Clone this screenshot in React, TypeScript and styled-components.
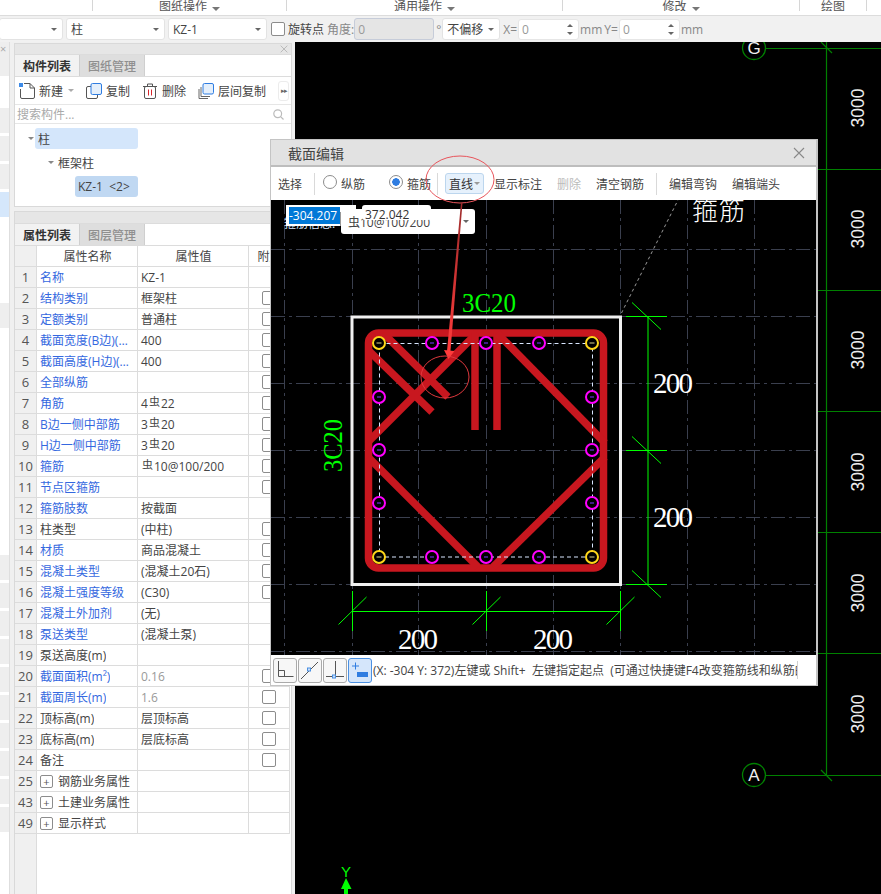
import React from "react";
import styled, { createGlobalStyle } from "styled-components";

const Global = createGlobalStyle`
  html, body { margin: 0; padding: 0; background: #fff; }
  * { box-sizing: border-box; }
`;

const FONT = `"Open Sans", "Noto Sans CJK SC", sans-serif`;

const Page = styled.div`
  position: relative;
  width: 881px;
  height: 894px;
  overflow: hidden;
  font-family: ${FONT};
  font-size: 12px;
  color: #333;
  background: #f0f0f0;
`;

/* ---------- ribbon ---------- */
const Ribbon = styled.div`
  display: flex;
  height: 16px;
  background: #fff;
  border-bottom: 1px solid #dcdcdc;
`;
const RibbonGroup = styled.div<{ $w: number; $last?: boolean }>`
  width: ${(p) => p.$w}px;
  height: 11px;
  display: flex;
  align-items: flex-end;
  justify-content: center;
  gap: 5px;
  overflow: hidden;
  line-height: 13px;
  color: #555;
  border-right: ${(p) => (p.$last ? "none" : "1px solid #d6d6d6")};
`;
const RibbonLabel = styled.span`
  font-size: 12px;
  flex: none;
  margin-bottom: -2px;
`;
const Caret = styled.i<{ $c?: string; $s?: number }>`
  display: inline-block;
  flex: none;
  width: 0;
  height: 0;
  border-left: ${(p) => p.$s ?? 3}px solid transparent;
  border-right: ${(p) => p.$s ?? 3}px solid transparent;
  border-top: ${(p) => p.$s ?? 3}px solid ${(p) => p.$c ?? "#666"};
`;

/* ---------- option bar ---------- */
const OptionBar = styled.div`
  height: 26px;
  display: flex;
  align-items: center;
  padding-left: 0;
  background: #f1f1f1;
`;
const SelectBox = styled.div<{ $w: number; $ml?: number }>`
  width: ${(p) => p.$w}px;
  height: 22px;
  margin-left: ${(p) => p.$ml ?? 0}px;
  padding: 0 5px 0 4px;
  display: flex;
  align-items: center;
  justify-content: space-between;
  background: #fff;
  border: 1px solid #e3e3e3;
  border-radius: 3px;
  color: #444;
`;
const CheckBox = styled.span<{ $ml?: number }>`
  display: inline-block;
  flex: none;
  width: 14px;
  height: 14px;
  margin-left: ${(p) => p.$ml ?? 0}px;
  background: #fff;
  border: 1px solid #8c8c8c;
  border-radius: 2px;
`;
const OptLabel = styled.span<{ $ml?: number; $muted?: boolean }>`
  flex: none;
  margin-left: ${(p) => p.$ml ?? 0}px;
  color: ${(p) => (p.$muted ? "#888" : "#444")};
  white-space: nowrap;
`;
const DisabledInput = styled.div`
  width: 80px;
  height: 22px;
  margin-left: 0;
  padding-left: 3px;
  display: flex;
  align-items: center;
  color: #999;
  background: #e5e5e5;
  border: 1px solid #c6ccd9;
  border-radius: 3px;
`;
const SpinInput = styled.div<{ $ml?: number }>`
  width: 61px;
  height: 21px;
  margin-left: ${(p) => p.$ml ?? 0}px;
  padding: 0 5px 0 3px;
  display: flex;
  align-items: center;
  justify-content: space-between;
  color: #999;
  background: #fff;
  border: 1px solid #e6e6e6;
  border-radius: 3px;
`;
const SpinArrows = styled.span`
  display: flex;
  flex-direction: column;
  gap: 5px;
`;
const UpCaret = styled.i`
  display: block;
  width: 0;
  height: 0;
  border-left: 3px solid transparent;
  border-right: 3px solid transparent;
  border-bottom: 3px solid #666;
`;

/* ---------- main ---------- */
const Main = styled.div`
  display: flex;
  height: 852px;
`;
const Strip = styled.div`
  width: 10px;
  flex: none;
  display: flex;
  flex-direction: column;
  background: #fff;
  border-right: 1px solid #dedede;
  overflow: hidden;
`;
const StripHead = styled.div`
  height: 34px;
  background: #eeeeee;
  color: #aaa;
  font-size: 11px;
  line-height: 14px;
  padding-left: 0;
`;
const StripBand = styled.div<{ $blue?: boolean; $mt: number }>`
  height: 25px;
  flex: none;
  margin-top: ${(p) => p.$mt}px;
  background: ${(p) => (p.$blue ? "#d5e7fb" : "#eeeeee")};
`;
const PanelColumn = styled.div`
  width: 278px;
  flex: none;
  margin-left: 4px;
  margin-right: 3px;
  padding-top: 1px;
  display: flex;
  flex-direction: column;
  gap: 4px;
`;
const Panel = styled.section<{ $grow?: boolean }>`
  display: flex;
  flex-direction: column;
  background: #fff;
  border: 1px solid #d9d9d9;
  ${(p) => (p.$grow ? "flex: 1; min-height: 0; border-bottom: none;" : "height: 164px;")}
`;
const PanelHead = styled.div<{ $h?: number }>`
  height: ${(p) => p.$h ?? 10}px;
  position: relative;
  flex: none;
  background: #e6e6e6;
  color: #aaa;
  display: flex;
  justify-content: flex-end;
  align-items: center;
  padding-right: 3px;
`;
const Tabs = styled.div`
  display: flex;
  height: 23px;
  flex: none;
  border-bottom: 1px solid #dcdcdc;
  border-top: 1px solid #dcdcdc;
`;
const Tab = styled.div<{ $active?: boolean }>`
  width: 65px;
  display: flex;
  align-items: center;
  justify-content: center;
  font-size: 12px;
  font-weight: ${(p) => (p.$active ? 700 : 500)};
  color: ${(p) => (p.$active ? "#333" : "#8f8f8f")};
  background: ${(p) => (p.$active ? "#f2f2f2" : "#dedede")};
  border-right: 1px solid #cfcfcf;
`;
const PanelBar = styled.div`
  height: 28px;
  flex: none;
  padding-left: 4px;
  padding-right: 2px;
  display: flex;
  align-items: center;
  gap: 12px;
  border-bottom: 1px solid #e6e6e6;
`;
const ToolItem = styled.div`
  display: flex;
  flex: none;
  align-items: center;
  gap: 4px;
  color: #444;
  white-space: nowrap;
`;
const ToolCaret = styled.span`
  display: flex;
  margin-left: 1px;
`;
const MoreBtn = styled.div`
  margin-left: auto;
  width: 11px;
  height: 20px;
  flex: none;
  display: flex;
  align-items: center;
  justify-content: center;
  border: 1px solid #ececec;
  border-radius: 3px;
  color: #666;
  font-size: 7px;
  letter-spacing: -1px;
`;
const SearchRow = styled.div`
  height: 19px;
  flex: none;
  padding: 0 7px 0 2px;
  display: flex;
  align-items: center;
  justify-content: space-between;
  color: #aaa;
  border-bottom: 1px solid #e6e6e6;
`;
const Tree = styled.div`
  flex: 1;
  display: flex;
  flex-direction: column;
  padding-top: 4px;
  gap: 3px;
`;
const TreeRow = styled.div<{ $indent: number }>`
  height: 21px;
  display: flex;
  align-items: center;
  padding-left: ${(p) => p.$indent}px;
  gap: 1px;
`;
const TreeLabel = styled.div<{ $bg?: string; $w?: number }>`
  height: 21px;
  width: ${(p) => (p.$w ? `${p.$w}px` : "auto")};
  padding: 0 3px;
  display: flex;
  align-items: center;
  background: ${(p) => p.$bg ?? "transparent"};
  border-radius: 3px;
  color: #444;
  white-space: nowrap;
`;

/* ---------- property table ---------- */
const PropGrid = styled.div`
  flex: 1;
  display: grid;
  grid-template-columns: 22px 101px 111px 41px;
  grid-auto-rows: 21px;
  align-content: start;
  background: linear-gradient(to right, #f0f0f0 21px, #dcdcdc 21px, #dcdcdc 22px, transparent 22px);
`;
const Cell = styled.div<{ $color?: string; $center?: boolean; $flush?: boolean }>`
  display: flex;
  align-items: center;
  min-width: 0;
  padding: ${(p) => (p.$flush ? "0" : "0 2px 0 3px")};
  color: ${(p) => p.$color ?? "#444"};
  justify-content: ${(p) => (p.$center ? "center" : "flex-start")};
  background: #fff;
  border-right: 1px solid #dcdcdc;
  border-bottom: 1px solid #dcdcdc;
  white-space: nowrap;
`;
const NumCell = styled(Cell)`
  padding: 0;
  justify-content: center;
  font-size: 13px;
  color: #555;
  background: #f0f0f0;
`;
const Ellipsis = styled.span`
  display: block;
  overflow: hidden;
  text-overflow: ellipsis;
`;
const Rebar = styled.span`
  font-size: 11px;
  margin: 0 1px;
  position: relative;
  top: -2px;
`;
const Expander = styled.span`
  width: 13px;
  height: 13px;
  flex: none;
  margin-right: 5px;
  border: 1px solid #8c8c8c;
  border-radius: 2px;
  display: flex;
  align-items: center;
  justify-content: center;
  font-size: 11px;
  line-height: 1;
  color: #555;
`;
const RowCheck = styled(CheckBox)`
  margin-left: 13px;
`;

/* ---------- cad canvas ---------- */
const CadArea = styled.div`
  flex: 1;
  background: #000;
  min-width: 0;
`;
const CadSvg = styled.svg`
  display: block;
`;

/* ---------- dialog ---------- */
const Dialog = styled.div`
  position: absolute;
  left: 270px;
  top: 139px;
  width: 548px;
  height: 547px;
  display: flex;
  flex-direction: column;
  background: #c9c9c9;
  border: 1px solid #c4c4c4;
  border-right-width: 2px;
`;
const DialogTitle = styled.div`
  height: 27px;
  flex: none;
  padding: 0 11px 0 17px;
  display: flex;
  align-items: center;
  justify-content: space-between;
  font-size: 14px;
  color: #444;
  background: #e2e2e2;
  border-bottom: 2px solid #bdbdbd;
`;
const DialogBar = styled.div`
  height: 33px;
  flex: none;
  padding-left: 7px;
  display: flex;
  align-items: center;
  background: #fff;
`;
const BarText = styled.span<{ $ml?: number; $muted?: boolean }>`
  flex: none;
  margin-left: ${(p) => p.$ml ?? 0}px;
  color: ${(p) => (p.$muted ? "#bbb" : "#444")};
  white-space: nowrap;
`;
const BarDivider = styled.span<{ $ml: number }>`
  width: 1px;
  height: 22px;
  flex: none;
  margin-left: ${(p) => p.$ml}px;
  background: #d9d9d9;
`;
const Radio = styled.span<{ $ml: number; $on?: boolean }>`
  width: 14px;
  height: 14px;
  flex: none;
  margin-left: ${(p) => p.$ml}px;
  margin-top: -4px;
  border: 1px solid #8c8c8c;
  border-radius: 50%;
  background: ${(p) =>
    p.$on ? "radial-gradient(circle, #2f7de1 0 3.5px, #fff 4px)" : "#fff"};
`;
const ModeButton = styled.div`
  width: 39px;
  height: 21px;
  flex: none;
  margin-left: 7px;
  padding: 0 3px;
  display: flex;
  align-items: center;
  justify-content: space-between;
  background: #e6f1fc;
  border: 1px solid #bcd6ee;
  border-radius: 3px;
`;
const DialogCanvas = styled.div`
  position: relative;
  height: 455px;
  flex: none;
  background: #000;
  overflow: hidden;
`;
const SvgFill = styled.svg`
  display: block;
`;
const CoordOne = styled.div`
  position: absolute;
  left: 15px;
  top: 5px;
  width: 70px;
  height: 21px;
  padding: 2px 0 0 3px;
  background: #fff;
  clip-path: polygon(0 0, 100% 0, 100% 33%, 78% 33%, 78% 100%, 0 100%);
`;
const Selected = styled.span`
  display: block;
  width: 51px;
  height: 17px;
  line-height: 17px;
  font-size: 12px;
  color: #fff;
  background: #0078d7;
  white-space: nowrap;
`;
const CoordTwo = styled.div`
  position: absolute;
  left: 91px;
  top: 5px;
  width: 69px;
  height: 15px;
  padding-left: 3px;
  line-height: 20px;
  font-size: 12px;
  background: #fff;
  border-radius: 3px;
`;
const InfoSelect = styled.div`
  position: absolute;
  left: 70px;
  top: 9px;
  width: 134px;
  height: 25px;
  padding: 0 6px 0 7px;
  display: flex;
  align-items: center;
  justify-content: space-between;
  background: #fff;
  border-radius: 3px;
  color: #444;
`;
const InfoLabel = styled.div`
  position: absolute;
  left: 13px;
  top: 17px;
  color: #dbe8ff;
  font-size: 12px;
  line-height: 14px;
`;
const StatusBar = styled.div`
  flex: 1;
  display: flex;
  align-items: center;
  padding-left: 2px;
  background: #fff;
  overflow: hidden;
`;
const SnapGroup = styled.div`
  display: flex;
  flex: none;
  gap: 1px;
`;
const SnapBtn = styled.div<{ $on?: boolean }>`
  width: 24px;
  height: 25px;
  display: flex;
  align-items: center;
  justify-content: center;
  background: ${(p) => (p.$on ? "#d5e6fb" : "#f7f7f7")};
  border: 1px solid ${(p) => (p.$on ? "#4a90e2" : "#aaa")};
  border-radius: 3px;
`;
const StatusText = styled.div`
  width: 425px;
  flex: none;
  margin-left: 1px;
  overflow: hidden;
  white-space: pre;
  color: #444;
  border-right: 1px solid #d0d0d0;
`;
const Annotation = styled.svg`
  position: absolute;
  left: -1px;
  top: -1px;
  pointer-events: none;
`;

/* ---------- icons ---------- */
const NewIcon = () => (
  <svg width="16" height="16" viewBox="0 0 16 16" fill="none">
    <path d="M1.5 6v8a1.5 1.5 0 0 0 1.5 1.5h11a1.5 1.5 0 0 0 1.5-1.5V5L11 .5H5" stroke="#555" />
    <path d="M11 .5V5h4.5" stroke="#555" />
    <rect x="0" y="0" width="4" height="4" fill="#3d8be8" />
  </svg>
);
const CopyIcon = () => (
  <svg width="16" height="16" viewBox="0 0 16 16" fill="none">
    <rect x=".5" y="3.5" width="11" height="12" rx="1.5" stroke="#555" fill="#fff" />
    <rect x="5" y=".5" width="10.5" height="11" rx="1.5" stroke="#2f7de1" fill="#e4effb" />
  </svg>
);
const TrashIcon = () => (
  <svg width="16" height="16" viewBox="0 0 16 16" fill="none">
    <path d="M1 3.5h14M5.5 3V1h5v2" stroke="#555" />
    <rect x="2.5" y="3.5" width="11" height="12" rx="1.5" stroke="#555" />
    <path d="M6.5 6.5v6M9.5 6.5v6" stroke="#d9262c" />
  </svg>
);
const LayerCopyIcon = () => (
  <svg width="16" height="16" viewBox="0 0 16 16" fill="none">
    <path d="M1 6v9.5h9M3 4v9.5h9" stroke="#666" />
    <rect x="5" y=".5" width="10.5" height="10.5" rx="1.5" stroke="#2f7de1" fill="#e4effb" />
  </svg>
);
const SearchIcon = () => (
  <svg width="11" height="11" viewBox="0 0 11 11" fill="none" stroke="#bbb" strokeWidth="1.2">
    <circle cx="4.7" cy="4.7" r="3.9" />
    <path d="M7.6 7.6 10.5 10.5" />
  </svg>
);
const CloseX = ({ size, color }: { size: number; color: string }) => (
  <svg width={size} height={size} viewBox="0 0 12 12" stroke={color} strokeWidth="1.1">
    <path d="M1 1 11 11M11 1 1 11" />
  </svg>
);
const SnapIcon1 = () => (
  <svg width="18" height="18" viewBox="0 0 18 18" fill="none" stroke="#555">
    <path d="M2.5 0v15.5h15M2.5 9.5h6v6" />
  </svg>
);
const SnapIcon2 = () => (
  <svg width="18" height="18" viewBox="0 0 18 18" fill="none" stroke="#555">
    <path d="M0 18 17 1" />
    <rect x="6.5" y="7" width="3" height="3" fill="#cfe0f7" stroke="#4a90e2" />
  </svg>
);
const SnapIcon3 = () => (
  <svg width="18" height="18" viewBox="0 0 18 18" fill="none" stroke="#555">
    <path d="M9.5 0v15.5M0 15.5h18" />
    <rect x="6.5" y="14" width="3" height="3" fill="#cfe0f7" stroke="#4a90e2" />
  </svg>
);
const SnapIcon4 = () => (
  <svg width="18" height="18" viewBox="0 0 18 18" fill="none">
    <path d="M1 5h7M4.5 1.5v7" stroke="#2f7de1" />
    <rect x="6" y="11" width="11" height="5" fill="#2f7de1" />
  </svg>
);

/* ---------- data ---------- */
const BLUE = "#3468e0";
type Row = { n: number; name: string; value?: string; blue?: boolean; check?: boolean; gray?: boolean; group?: boolean };
const rows: Row[] = [
  { n: 1, name: "名称", value: "KZ-1", blue: true },
  { n: 2, name: "结构类别", value: "框架柱", blue: true, check: true },
  { n: 3, name: "定额类别", value: "普通柱", blue: true, check: true },
  { n: 4, name: "截面宽度(B边)(mm)", value: "400", blue: true, check: true },
  { n: 5, name: "截面高度(H边)(mm)", value: "400", blue: true, check: true },
  { n: 6, name: "全部纵筋", blue: true, check: true },
  { n: 7, name: "角筋", value: "4虫22", blue: true, check: true },
  { n: 8, name: "B边一侧中部筋", value: "3虫20", blue: true, check: true },
  { n: 9, name: "H边一侧中部筋", value: "3虫20", blue: true, check: true },
  { n: 10, name: "箍筋", value: "虫10@100/200", blue: true, check: true },
  { n: 11, name: "节点区箍筋", blue: true, check: true },
  { n: 12, name: "箍筋肢数", value: "按截面", blue: true },
  { n: 13, name: "柱类型", value: "(中柱)", check: true },
  { n: 14, name: "材质", value: "商品混凝土", blue: true, check: true },
  { n: 15, name: "混凝土类型", value: "(混凝土20石)", blue: true, check: true },
  { n: 16, name: "混凝土强度等级", value: "(C30)", blue: true, check: true },
  { n: 17, name: "混凝土外加剂", value: "(无)", blue: true },
  { n: 18, name: "泵送类型", value: "(混凝土泵)", blue: true },
  { n: 19, name: "泵送高度(m)" },
  { n: 20, name: "截面面积(m²)", value: "0.16", blue: true, check: true, gray: true },
  { n: 21, name: "截面周长(m)", value: "1.6", blue: true, check: true, gray: true },
  { n: 22, name: "顶标高(m)", value: "层顶标高", check: true },
  { n: 23, name: "底标高(m)", value: "层底标高", check: true },
  { n: 24, name: "备注", check: true },
  { n: 25, name: "钢筋业务属性", group: true },
  { n: 43, name: "土建业务属性", group: true },
  { n: 49, name: "显示样式", group: true },
];

const renderValue = (v?: string) => {
  if (!v || !v.includes("虫")) return v;
  const [a, b] = v.split("虫");
  return (
    <>
      {a}
      <Rebar>虫</Rebar>
      {b}
    </>
  );
};

const GRID_X = [284, 352, 418, 486, 553, 620, 687, 754];
const GRID_Y = [249, 316, 383, 450, 517, 584, 651];
const RED_LINES = [
  [383, 333, 448, 397],
  [368, 350, 432, 412],
  [477, 333, 368, 442],
  [475, 333, 475, 430],
  [497, 333, 497, 430],
  [497, 333, 605, 443],
  [368, 457, 478, 567],
  [605, 457, 493, 567],
];
const YELLOW = [
  [379, 343],
  [592, 343],
  [379, 557],
  [592, 557],
];
const MAGENTA = [
  [432, 343],
  [486, 343],
  [539, 343],
  [432, 557],
  [486, 557],
  [539, 557],
  [379, 397],
  [379, 450],
  [379, 503],
  [592, 397],
  [592, 450],
  [592, 503],
];
const DIM_Y = [316.5, 450.5, 584.5];
const DIM_X = [352.5, 486.5, 620.5];
const AXIS_Y = [169, 290, 411, 532, 653, 775];
const AXIS_TEXT = [108, 229, 350, 472, 593, 714];
const GREEN = "#008000";

const CadCanvas = () => (
  <CadSvg width="586" height="852" viewBox="295 42 586 852">
    <path d="M826.5 42V775" stroke={GREEN} strokeWidth="1.2" />
    {AXIS_Y.map((y) => (
      <path key={y} d={`M800 ${y}.5H881`} stroke={GREEN} strokeWidth="1.2" />
    ))}
    <path d="M766 48.5H881" stroke={GREEN} strokeWidth="1.2" />
    <path d="M766 775.5H826" stroke={GREEN} strokeWidth="1.2" />
    <path d="M821 42 832 53M821 770 832 781" stroke={GREEN} strokeWidth="1.2" />
    <circle cx="754" cy="48" r="11.5" fill="#000" stroke={GREEN} strokeWidth="1.3" />
    <circle cx="754" cy="775" r="11.5" fill="#000" stroke={GREEN} strokeWidth="1.3" />
    <text x="754" y="54" textAnchor="middle" fill="#f0f0f0" fontSize="17" fontFamily="Liberation Sans">G</text>
    <text x="754" y="781" textAnchor="middle" fill="#f0f0f0" fontSize="17" fontFamily="Liberation Sans">A</text>
    {AXIS_TEXT.map((y) => (
      <text
        key={y}
        x="0"
        y="0"
        transform={`translate(863.5 ${y + 19.5}) rotate(-90)`}
        fill="#ececec"
        fontSize="19"
        fontFamily="Liberation Sans"
        textLength="39"
        lengthAdjust="spacingAndGlyphs"
      >
        3000
      </text>
    ))}
    <text x="346" y="877" textAnchor="middle" fill="#00ff00" fontSize="15" fontFamily="Liberation Sans">Y</text>
    <polygon points="346,878 351.5,889 341,889" fill="#00ff00" />
    <rect x="344" y="889" width="4" height="5" fill="#00ff00" />
  </CadSvg>
);

const SectionDrawing = () => (
  <SvgFill width="545" height="455" viewBox="271 200 545 455">
    {GRID_X.map((x) => (
      <path key={x} d={`M${x}.5 200V655`} stroke="#3a3f4e" strokeDasharray="14 4 3 4" />
    ))}
    {GRID_Y.map((y) => (
      <path key={y} d={`M271 ${y}.5H816`} stroke="#3a3f4e" strokeDasharray="14 4 3 4" />
    ))}
    <path d="M621.5 313 678 200" stroke="#9a9a9a" strokeDasharray="3 3" />
    <rect x="352" y="317" width="268.5" height="267.5" fill="none" stroke="#f0f0f0" strokeWidth="3" />

    <rect x="368.5" y="333" width="235" height="235" rx="10" fill="none" stroke="#c8171f" strokeWidth="7.5" />
    {RED_LINES.map(([a, b, c, d], i) => (
      <line key={i} x1={a} y1={b} x2={c} y2={d} stroke="#c8171f" strokeWidth="7.5" />
    ))}
    <rect x="379.5" y="343.5" width="213" height="213.5" fill="none" stroke="#d8e6ff" strokeDasharray="4 3" />
    {YELLOW.map(([x, y]) => (
      <g key={`${x}-${y}`}>
        <circle cx={x} cy={y} r="6" fill="#000" stroke="#ffd71a" strokeWidth="2" />
        <path d={`M${x - 2.5} ${y}h5`} stroke="#6e6b46" strokeWidth="2" />
      </g>
    ))}
    {MAGENTA.map(([x, y]) => (
      <g key={`${x}-${y}`}>
        <circle cx={x} cy={y} r="6" fill="#000" stroke="#ff00ff" strokeWidth="2" />
        <path d={`M${x - 2} ${y}h4`} stroke="#3f1a85" strokeWidth="2" />
      </g>
    ))}

    {/* right dimension */}
    <path d="M648 316V584" stroke="#00ff00" />
    {DIM_Y.map((y) => (
      <g key={y}>
        <path d={`M626 ${y}H667`} stroke="#00ff00" />
        <path d={`M632 ${y - 14}L661 ${y + 13}`} stroke="#00ff00" />
      </g>
    ))}
    {/* bottom dimension */}
    <path d="M352 611.5H621" stroke="#00ff00" />
    {DIM_X.map((x) => (
      <g key={x}>
        <path d={`M${x} 591V631`} stroke="#00ff00" />
        <path d={`M${x - 14} 624.5L${x + 14} 597`} stroke="#00ff00" />
      </g>
    ))}

    <text x="462" y="312" fill="#00ff00" fontSize="27" fontFamily="Liberation Serif" textLength="54" lengthAdjust="spacingAndGlyphs">3C20</text>
    <text transform="translate(342 472) rotate(-90)" fill="#00ff00" fontSize="27" fontFamily="Liberation Serif" textLength="53" lengthAdjust="spacingAndGlyphs">3C20</text>

    <text x="653" y="393" fill="#fff" fontSize="29" fontFamily="Liberation Serif" textLength="40">200</text>
    <text x="653" y="527" fill="#fff" fontSize="29" fontFamily="Liberation Serif" textLength="40">200</text>
    <text x="398" y="649" fill="#fff" fontSize="29" fontFamily="Liberation Serif" textLength="40">200</text>
    <text x="533" y="649" fill="#fff" fontSize="29" fontFamily="Liberation Serif" textLength="40">200</text>
    <text x="692" y="220" fill="#fff" fontSize="26" fontWeight="300" fontFamily="Noto Sans CJK SC" letterSpacing="1">箍筋</text>
  </SvgFill>
);

const STATUS = "(X: -304 Y: 372)左键或 Shift+  左键指定起点  (可通过快捷键F4改变箍筋线和纵筋的输入方式)";

export default function App() {
  return (
    <Page>
      <Global />
      <Ribbon>
        <RibbonGroup $w={93} />
        <RibbonGroup $w={194}>
          <RibbonLabel>图纸操作</RibbonLabel>
          <Caret $s={4} $c="#777" />
        </RibbonGroup>
        <RibbonGroup $w={276}>
          <RibbonLabel>通用操作</RibbonLabel>
          <Caret $s={4} $c="#777" />
        </RibbonGroup>
        <RibbonGroup $w={237}>
          <RibbonLabel>修改</RibbonLabel>
          <Caret $s={4} $c="#777" />
        </RibbonGroup>
        <RibbonGroup $w={67}>
          <RibbonLabel>绘图</RibbonLabel>
        </RibbonGroup>
        <RibbonGroup $w={14} $last />
      </Ribbon>

      <OptionBar>
        <SelectBox $w={64} $ml={-1}>
          <span />
          <Caret />
        </SelectBox>
        <SelectBox $w={99} $ml={3}>
          <span>柱</span>
          <Caret />
        </SelectBox>
        <SelectBox $w={99} $ml={3}>
          <span>KZ-1</span>
          <Caret />
        </SelectBox>
        <CheckBox $ml={4} />
        <OptLabel $ml={3}>旋转点</OptLabel>
        <OptLabel $ml={3} $muted>角度:</OptLabel>
        <DisabledInput>0</DisabledInput>
        <OptLabel $ml={2} $muted>°</OptLabel>
        <SelectBox $w={58} $ml={1}>
          <span>不偏移</span>
          <Caret />
        </SelectBox>
        <OptLabel $ml={3} $muted>X=</OptLabel>
        <SpinInput $ml={1}>
          <span>0</span>
          <SpinArrows>
            <UpCaret />
            <Caret />
          </SpinArrows>
        </SpinInput>
        <OptLabel $ml={1} $muted>mm</OptLabel>
        <OptLabel $ml={2} $muted>Y=</OptLabel>
        <SpinInput $ml={1}>
          <span>0</span>
          <SpinArrows>
            <UpCaret />
            <Caret />
          </SpinArrows>
        </SpinInput>
        <OptLabel $ml={1} $muted>mm</OptLabel>
      </OptionBar>

      <Main>
        <Strip>
          <StripHead>×</StripHead>
          <StripBand $mt={32} />
          <StripBand $mt={3} />
          <StripBand $mt={3} />
          <StripBand $mt={3} $blue />
          <StripBand $mt={86} />
          <StripBand $mt={227} />
          {Array.from({ length: 9 }, (_, i) => (
            <StripBand key={i} $mt={3} />
          ))}
        </Strip>

        <PanelColumn>
          <Panel>
            <PanelHead>
              <CloseX size={8} color="#aaa" />
            </PanelHead>
            <Tabs>
              <Tab $active>构件列表</Tab>
              <Tab>图纸管理</Tab>
            </Tabs>
            <PanelBar>
              <ToolItem>
                <NewIcon />
                <span>新建</span>
                <ToolCaret>
                  <Caret $c="#aaa" />
                </ToolCaret>
              </ToolItem>
              <ToolItem>
                <CopyIcon />
                <span>复制</span>
              </ToolItem>
              <ToolItem>
                <TrashIcon />
                <span>删除</span>
              </ToolItem>
              <ToolItem>
                <LayerCopyIcon />
                <span>层间复制</span>
              </ToolItem>
              <MoreBtn>▸▸</MoreBtn>
            </PanelBar>
            <SearchRow>
              <span>搜索构件...</span>
              <SearchIcon />
            </SearchRow>
            <Tree>
              <TreeRow $indent={13}>
                <Caret $c="#888" />
                <TreeLabel $bg="#d4e6fb" $w={103}>柱</TreeLabel>
              </TreeRow>
              <TreeRow $indent={33}>
                <Caret $c="#888" />
                <TreeLabel>框架柱</TreeLabel>
              </TreeRow>
              <TreeRow $indent={60}>
                <TreeLabel $bg="#c0d8f2" $w={63}>KZ-1&nbsp;&nbsp;&lt;2&gt;</TreeLabel>
              </TreeRow>
            </Tree>
          </Panel>

          <Panel $grow>
            <PanelHead $h={11} />
            <Tabs>
              <Tab $active>属性列表</Tab>
              <Tab>图层管理</Tab>
            </Tabs>
            <PropGrid>
              <NumCell />
              <Cell $center>属性名称</Cell>
              <Cell $center>属性值</Cell>
              <Cell $center>附加</Cell>
              {rows.map((r) => (
                <React.Fragment key={r.n}>
                  <NumCell>{r.n}</NumCell>
                  <Cell $color={r.blue ? BLUE : "#444"}>
                    {r.group && <Expander>+</Expander>}
                    <Ellipsis>{r.name}</Ellipsis>
                  </Cell>
                  <Cell $color={r.gray ? "#999" : "#444"}>{renderValue(r.value)}</Cell>
                  <Cell $flush>{r.check && <RowCheck />}</Cell>
                </React.Fragment>
              ))}
            </PropGrid>
          </Panel>
        </PanelColumn>

        <CadArea>
          <CadCanvas />
        </CadArea>
      </Main>

      <Dialog>
        <DialogTitle>
          <span>截面编辑</span>
          <CloseX size={12} color="#888" />
        </DialogTitle>
        <DialogBar>
          <BarText>选择</BarText>
          <BarDivider $ml={12} />
          <Radio $ml={8} />
          <BarText $ml={4}>纵筋</BarText>
          <Radio $ml={24} $on />
          <BarText $ml={4}>箍筋</BarText>
          <BarDivider $ml={6} />
          <ModeButton>
            <span>直线</span>
            <Caret $c="#999" />
          </ModeButton>
          <BarText $ml={10}>显示标注</BarText>
          <BarText $ml={15} $muted>删除</BarText>
          <BarText $ml={15}>清空钢筋</BarText>
          <BarDivider $ml={12} />
          <BarText $ml={12}>编辑弯钩</BarText>
          <BarText $ml={15}>编辑端头</BarText>
        </DialogBar>
        <DialogCanvas>
          <SectionDrawing />
          <InfoLabel>箍筋信息:</InfoLabel>
          <InfoSelect>
            <span>虫10@100/200</span>
            <Caret />
          </InfoSelect>
          <CoordOne>
            <Selected>-304.207</Selected>
          </CoordOne>
          <CoordTwo>372.042</CoordTwo>
        </DialogCanvas>
        <StatusBar>
          <SnapGroup>
            <SnapBtn><SnapIcon1 /></SnapBtn>
            <SnapBtn><SnapIcon2 /></SnapBtn>
            <SnapBtn><SnapIcon3 /></SnapBtn>
            <SnapBtn $on><SnapIcon4 /></SnapBtn>
          </SnapGroup>
          <StatusText>{STATUS}</StatusText>
        </StatusBar>
        <Annotation width="548" height="547" viewBox="270 139 548 547">
          <defs>
            <linearGradient id="arrowFade" gradientUnits="userSpaceOnUse" x1="0" y1="203" x2="0" y2="350">
              <stop offset="0" stopColor="#9c2a2a" />
              <stop offset="1" stopColor="#ff3b3b" />
            </linearGradient>
          </defs>
          <ellipse cx="460" cy="179.5" rx="34" ry="23.5" fill="none" stroke="#e8555c" />
          <polygon points="461,203 462.5,203 450.5,351 447,351" fill="url(#arrowFade)" />
          <polygon points="444,350 454.5,351 448.5,359" fill="#ff3b3b" />
          <ellipse cx="445" cy="377" rx="24" ry="21" fill="none" stroke="#e0393e" />
        </Annotation>
      </Dialog>
    </Page>
  );
}
